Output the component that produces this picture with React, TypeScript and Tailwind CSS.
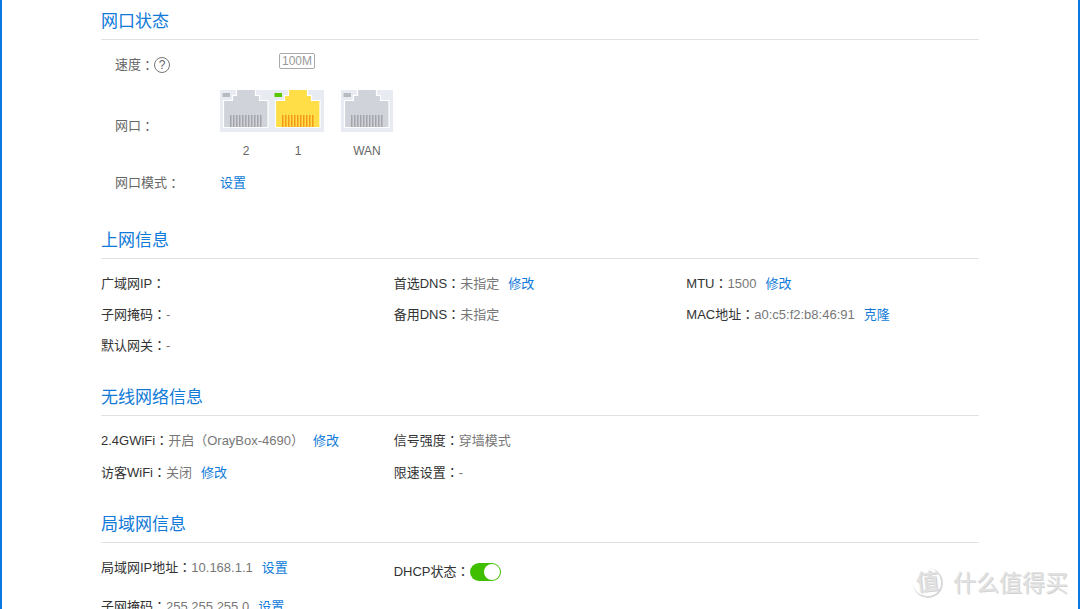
import type { ReactNode } from 'react';

// The Traditional Chinese glyph sits in the middle of its cell
function Colon() {
  return (
    <span lang="zh-TW" className="font-['Noto_Sans_CJK_TC',sans-serif]">
      ：
    </span>
  );
}

function ActionLink({ children }: { children: ReactNode }) {
  return (
    <a href="#" className="text-[#0f7ad8] hover:underline">
      {children}
    </a>
  );
}

function Section({ title, children }: { title: string; children: ReactNode }) {
  return (
    <section className="mb-[25px]">
      <h2 className="border-b border-[#e2e2e2] pb-[5px] text-[17px] leading-6 text-[#0f7ad8]">{title}</h2>
      <div className="pt-[9px]">{children}</div>
    </section>
  );
}

function Field({ label, value, action }: { label: string; value?: string; action?: string }) {
  return (
    <div className="flex h-[31px] items-center whitespace-nowrap">
      <span className="text-[#333]">
        {label}
        <Colon />
      </span>
      <span className="mr-[9px] text-[#777]">{value}</span>
      {action ? <ActionLink>{action}</ActionLink> : null}
    </div>
  );
}

function Port({ name, active }: { name: string; active?: boolean }) {
  const pins = Array.from({ length: 11 }, (_, i) => 10 + i * 3);

  return (
    <div className="flex w-[52px] flex-col items-center">
      <svg width="52" height="42" viewBox="0 0 52 42" aria-hidden="true">
        <rect width="52" height="42" fill="#e8ebf2" />
        <path
          d="M16.5 -1V5.5H12.5V10.500H3.5V37.5H48V10.500H39.500V5.500H35.500V-1Z"
          fill={active ? '#ffde47' : '#d0d3da'}
          stroke="#fff"
          strokeWidth="1.2"
        />
        <rect x="2.500" y="3" width="7.500" height="4" fill={active ? '#5ac800' : '#b7bac1'} />
        {pins.map((x) => (
          <rect key={x} x={x} y="25" width="1.500" height="12" fill={active ? '#f39a1c' : '#a3a5aa'} />
        ))}
      </svg>
      <span className="mt-[9px] text-xs leading-5">{name}</span>
    </div>
  );
}

function PortStatus() {
  return (
    <div className="grid grid-cols-[105px_1fr] pl-3.5 text-[#666]">
      <div className="flex h-[31px] items-center">
        速度
        <Colon />
        <button
          type="button"
          aria-label="帮助"
          className="flex size-4 items-center justify-center rounded-full border border-[#777] text-xs"
        >
          ?
        </button>
      </div>
      <div className="flex h-[41px] pt-1">
        <span className="ml-[59px] h-4 rounded-[2px] border border-[#aaa] px-0.5 text-xs leading-[14px] text-[#999]">
          100M
        </span>
      </div>
      <div className="flex h-[72px] items-center">
        网口
        <Colon />
      </div>
      <div className="flex gap-[17px]">
        <div className="flex">
          <Port name="2" />
          <Port name="1" active />
        </div>
        <Port name="WAN" />
      </div>
      <div className="flex h-[42px] items-center">
        网口模式
        <Colon />
      </div>
      <div className="flex items-center">
        <ActionLink>设置</ActionLink>
      </div>
    </div>
  );
}

function Watermark() {
  return (
    <div className="pointer-events-none absolute right-2.5 bottom-2.5 flex items-center gap-2.5 text-[#e2e2e2] [text-shadow:1px_1px_0_#d2d2d2]">
      <span className="flex size-[30px] items-center justify-center rounded-full border-r-2 border-b-2 border-[#d8d8d8]">
        <span className="-rotate-6 text-[23px] leading-none font-medium">值</span>
      </span>
      <span className="text-[23px] leading-8">什么值得买</span>
    </div>
  );
}

export default function App() {
  return (
    <div className="relative h-screen overflow-hidden border-x-2 border-[#0a78de] bg-white font-['Liberation_Sans','Noto_Sans_CJK_SC',sans-serif] text-[13px]">
      <main lang="zh-CN" className="mx-[99px] pt-2.5">
        <Section title="网口状态">
          <PortStatus />
        </Section>

        <Section title="上网信息">
          <div className="grid grid-cols-3">
            <Field label="广域网IP" />
            <Field label="首选DNS" value="未指定" action="修改" />
            <Field label="MTU" value="1500" action="修改" />
            <Field label="子网掩码" value="-" />
            <Field label="备用DNS" value="未指定" />
            <Field label="MAC地址" value="a0:c5:f2:b8:46:91" action="克隆" />
            <Field label="默认网关" value="-" />
          </div>
        </Section>

        <Section title="无线网络信息">
          <div className="grid grid-cols-3 gap-y-px">
            <Field label="2.4GWiFi" value="开启（OrayBox-4690）" action="修改" />
            <Field label="信号强度" value="穿墙模式" />
            <div />
            <Field label="访客WiFi" value="关闭" action="修改" />
            <Field label="限速设置" value="-" />
          </div>
        </Section>

        <Section title="局域网信息">
          <div className="grid grid-cols-3">
            <Field label="局域网IP地址" value="10.168.1.1" action="设置" />
            <div className="flex h-[39px] items-center text-[#333]">
              <label htmlFor="dhcp">
                DHCP状态
                <Colon />
              </label>
              <input
                id="dhcp"
                type="checkbox"
                role="switch"
                defaultChecked
                className="flex h-[18px] w-[31px] appearance-none items-center rounded-full bg-[#bbb] px-px before:size-4 before:rounded-full before:bg-white checked:justify-end checked:bg-[#3fbf00]"
              />
            </div>
            <div />
            <Field label="子网掩码" value="255.255.255.0" action="设置" />
          </div>
        </Section>
      </main>
      <Watermark />
    </div>
  );
}
